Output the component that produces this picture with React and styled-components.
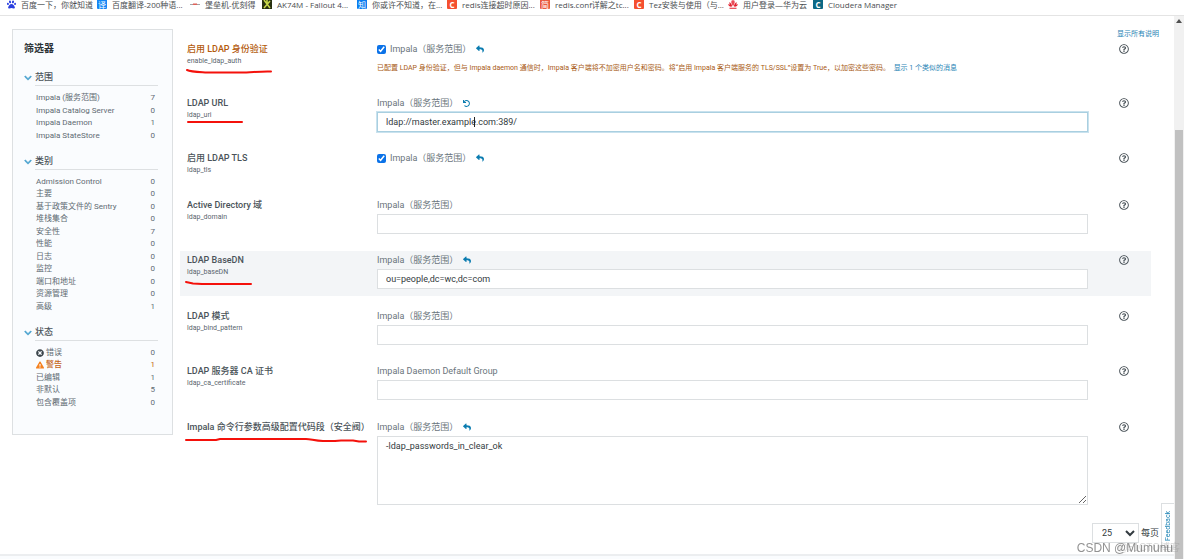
import React from 'react';
import styled, { createGlobalStyle } from 'styled-components';
import {
  FaReply,
  FaUndo,
  FaRegQuestionCircle,
  FaChevronDown,
  FaTimesCircle,
  FaExclamationTriangle,
  FaPaw,
} from 'react-icons/fa';

const GlobalStyle = createGlobalStyle`
  * { box-sizing: border-box; }
  body {
    margin: 0;
    background: #fff;
    color: #5a656d;
    font-family: Roboto, "Noto Sans CJK SC", sans-serif;
    font-size: 9px;
    line-height: 12px;
    overflow: hidden;
  }
  button, input, textarea, select { font: inherit; color: inherit; margin: 0; }
  a { color: #1f84b5; text-decoration: none; }
  ul { list-style: none; margin: 0; padding: 0; }
`;

const Shell = styled.div`
  display: flex;
  flex-direction: column;
  min-height: 100vh;
`;

const BookmarkBar = styled.nav`
  display: flex;
  gap: 10px;
  height: 16px;
  padding-left: 6px;
  border-bottom: 1px solid #e4e4e4;
  overflow: hidden;
  font-family: "Open Sans", "Noto Sans CJK SC", sans-serif;
  font-size: 8px;
  line-height: 9px;
`;

const Bookmark = styled.a`
  display: flex;
  flex: none;
  gap: 5px;
  height: 9px;
  color: #4a4d50;
`;

const BookmarkLabel = styled.span`
  width: ${(p) => p.$width}px;
  white-space: nowrap;
`;

const SiteIcon = styled.span`
  display: flex;
  align-items: center;
  justify-content: center;
  width: 10px;
  height: 9px;
  border-radius: 0 0 1px 1px;
  background: ${(p) => p.$bg || 'transparent'};
  color: ${(p) => p.$color || '#fff'};
  font-size: 8px;
  line-height: 8px;
  font-weight: ${(p) => (p.$bold ? 700 : 400)};
`;

const Body = styled.div`
  display: flex;
  flex: 1;
`;

const Page = styled.div`
  flex: 1;
  min-width: 0;
  display: flex;
  flex-direction: column;
`;

const Columns = styled.div`
  display: flex;
  align-items: flex-start;
  gap: 7px;
  padding: 13px 15px 11px 12px;
`;

const Sidebar = styled.aside`
  flex: none;
  width: 161px;
  padding: 11px 14px 25px 11px;
  border: 1px solid #dde0e2;
  background: #fafcfe;
`;

const SidebarTitle = styled.h2`
  margin: 0 0 13px;
  color: #2b3236;
  font-size: 10px;
  line-height: 16px;
  font-weight: 700;
`;

const Section = styled.section`
  & + & { margin-top: 12px; }
`;

const SectionHeader = styled.button`
  display: grid;
  grid-template-columns: 11px 1fr;
  align-items: center;
  width: 100%;
  height: 16px;
  margin-bottom: 6px;
  padding: 0;
  border: 0;
  background: none;
  text-align: left;
  font-weight: 500;
  line-height: 15px;
  color: #4a5359;
  & > svg { color: #4ba3cf; stroke: #4ba3cf; stroke-width: 30; }
  & > span { border-bottom: 1px solid #dde0e2; }
`;

const FilterList = styled.ul`
  display: grid;
  grid-auto-rows: 1fr;
  height: ${(p) => p.$height}px;
  padding: 0 3px 0 12px;
  font-size: 8px;
  line-height: 12px;
`;

const FilterLink = styled.a`
  display: flex;
  align-items: center;
  gap: 2px;
  color: ${(p) => (p.$warn ? '#c46210' : '#5f6b73')};
  font-weight: ${(p) => (p.$warn ? 500 : 400)};
`;

const FilterCount = styled.span`
  margin-left: auto;
  font-weight: 400;
`;

const Main = styled.main`
  flex: 1;
  min-width: 0;
  padding-top: 1px;
`;

const ShowAll = styled.div`
  margin-bottom: 2px;
  text-align: right;
  font-size: 7px;
  line-height: 8px;
`;

const Row = styled.div`
  display: grid;
  grid-template-columns: 190px minmax(0, 1fr) 63px;
  min-height: 36px;
  margin: 0 8px 10px 0;
  padding: 3px 0 7px 7px;
  background: ${(p) => (p.$active ? '#f3f5f7' : 'transparent')};
  &:nth-child(odd) { margin-bottom: 11px; }
`;

const RowName = styled.div`
  position: relative;
`;

const Title = styled.div`
  color: ${(p) => (p.$warn ? '#b35a0c' : '#4a5359')};
  font-weight: 500;
  white-space: nowrap;
`;

const PropertyName = styled.div`
  font-size: 7px;
  line-height: 12px;
`;

const Stroke = styled.svg`
  position: absolute;
  left: -2px;
  top: ${(p) => p.$top}px;
  width: 184px;
  height: 8px;
  overflow: visible;
  fill: none;
  stroke: #f4110b;
  stroke-width: 2;
  stroke-linecap: round;
  stroke-linejoin: round;
`;

const FieldLabel = styled.label`
  display: inline-flex;
  align-items: center;
  gap: 4px;
  height: 12px;
  color: #6a757c;
`;

const FieldHead = styled.div`
  display: flex;
  align-items: center;
  gap: 5px;
  height: 12px;
`;

const Checkbox = styled.input`
  width: 9px;
  height: 9px;
  accent-color: #0b72e8;
`;

const IconButton = styled.button`
  display: flex;
  padding: 0;
  border: 0;
  background: none;
  color: ${(p) => (p.$help ? '#4c555b' : '#0b7cb0')};
`;

const HelpCell = styled.div`
  display: flex;
  align-items: flex-start;
  padding: 1px 0 0 31px;
`;

const InputWrap = styled.div`
  position: relative;
`;

const TextInput = styled.input`
  display: block;
  width: 100%;
  height: 20px;
  margin-top: 3px;
  padding: 0 8px;
  border: 1px solid ${(p) => (p.$focus ? '#a9cfe0' : '#dcdfe1')};
  box-shadow: ${(p) => (p.$focus ? '0 0 0 1px #c9e2ee' : 'none')};
  background: #fff;
  color: #333b40;
  outline: 0;
`;

const Caret = styled.span`
  position: absolute;
  left: 97px;
  top: 5px;
  width: 1px;
  height: 10px;
  background: #222;
`;

const TextArea = styled.textarea`
  display: block;
  width: 100%;
  height: 69px;
  margin-top: 3px;
  padding: 3px 8px;
  border: 1px solid #dcdfe1;
  background: #fff;
  color: #333b40;
  outline: 0;
`;

const Warning = styled.p`
  margin: 6px 0 1px;
  color: #a85a14;
  font-size: 7px;
  line-height: 14px;
  white-space: nowrap;
  & > a { margin-left: 2px; }
`;

const Pager = styled.label`
  display: flex;
  justify-content: flex-end;
  align-items: center;
  gap: 2px;
  padding-top: 1px;
  color: #333b40;
`;

const PageSize = styled.select`
  width: 47px;
  height: 20px;
  padding: 0 0 0 5px;
  border: 1px solid #dcdfe1;
  background: #fff;
`;

const Footer = styled.footer`
  flex: 1;
  border-top: 2px solid #eceef0;
  background: #fafcfe;
`;

const Scrollbar = styled.div`
  flex: none;
  display: flex;
  flex-direction: column;
  align-items: center;
  width: 10px;
  padding-top: 3px;
  background: #f1f1f1;
`;

const ScrollThumb = styled.div`
  flex: 1;
  width: 8px;
  margin-top: 107px;
  background: #c1c1c1;
`;

const FeedbackTab = styled.button`
  position: fixed;
  right: 10px;
  bottom: 11px;
  width: 13px;
  height: 45px;
  padding: 0;
  border: 1px solid #dcdfe1;
  border-left: 0;
  background: #fff;
  color: #1f84b5;
  font-size: 7px;
  line-height: 12px;
  writing-mode: vertical-rl;
  transform: rotate(180deg);
`;

const Watermark = styled.div`
  position: fixed;
  right: ${(p) => p.$right}px;
  bottom: 4px;
  color: ${(p) => p.$color};
  font-family: "Liberation Sans", "Noto Sans CJK SC", sans-serif;
  font-size: ${(p) => p.$size}px;
  line-height: 14px;
  white-space: nowrap;
  pointer-events: none;
`;

const Huawei = () => (
  <svg width="10" height="9" viewBox="0 0 20 18" fill="#e3202f">
    <path d="M9.6 12C7 8 6 4 7.500 1c1.300-.8 2-.6 2.100.4zM10.400 12c2.600-4 3.600-8 2.100-11-1.300-.8-2-.6-2.100.4zM8.800 12.500C4 11 1.500 7 3.200 3.800 5 5 7.500 8.500 8.800 12.500zM11.200 12.500C16 11 18.500 7 16.800 3.800 15 5 12.500 8.500 11.200 12.500zM8 13.300C3 14 0 11 .6 8c2.800.8 5.800 2.600 7.400 5.300zM12 13.300c5 .7 8-2.300 7.400-5.300-2.800.8-5.800 2.600-7.400 5.300zM3 15.500h14v2H3z" />
  </svg>
);

const Bastion = () => (
  <svg width="10" height="9" viewBox="0 0 10 9">
    <path d="M0 4.500h3M7 4.500h3" stroke="#a3a6aa" />
    <path d="M3 5l1-1.500 1 1.500 1-1.500 1 1.500" stroke="#d8483e" fill="none" />
  </svg>
);

const Fallout = () => (
  <svg width="10" height="9" viewBox="0 0 10 9">
    <path d="M0 0h10v9H0z" fill="#283011" />
    <path d="M2 0l6 8M8 1L2 8M5 0v3" stroke="#c8d84a" strokeWidth="1.500" />
  </svg>
);

const bookmarks = [
  { label: '百度一下，你就知道', width: 66, icon: <FaPaw size={9} />, color: '#2a3fe0' },
  { label: '百度翻译-200种语...', width: 68, icon: '译', bg: '#1487f5' },
  { label: '堡垒机-优刻得', width: 47, icon: <Bastion /> },
  { label: 'AK74M - Fallout 4...', width: 70, icon: <Fallout /> },
  { label: '你或许不知道，在...', width: 65, icon: '知', bg: '#0a7cf0' },
  { label: 'redis连接超时原因...', width: 68, icon: 'C', bg: '#f5502f', bold: true },
  { label: 'redis.conf详解之tc...', width: 69, icon: '简', bg: '#ea5a41' },
  { label: 'Tez安装与使用（与...', width: 69, icon: 'C', bg: '#f5502f', bold: true },
  { label: '用户登录—华为云', width: 60, icon: <Huawei /> },
  { label: 'Cloudera Manager', width: 67, icon: 'C', bg: '#0c6884', bold: true },
];

const sections = [
  {
    title: '范围',
    height: 50,
    items: [
      ['Impala (服务范围)', 7],
      ['Impala Catalog Server', 0],
      ['Impala Daemon', 1],
      ['Impala StateStore', 0],
    ],
  },
  {
    title: '类别',
    height: 137,
    items: [
      ['Admission Control', 0],
      ['主要', 0],
      ['基于政策文件的 Sentry', 0],
      ['堆栈集合', 0],
      ['安全性', 7],
      ['性能', 0],
      ['日志', 0],
      ['监控', 0],
      ['端口和地址', 0],
      ['资源管理', 0],
      ['高级', 1],
    ],
  },
  {
    title: '状态',
    height: 62,
    items: [
      ['错误', 0, 'error'],
      ['警告', 1, 'warn'],
      ['已编辑', 1],
      ['非默认', 5],
      ['包含覆盖项', 0],
    ],
  },
];

const SCOPE = 'Impala（服务范围）';

const settings = [
  {
    id: 'enable_ldap_auth',
    title: '启用 LDAP 身份验证',
    type: 'checkbox',
    warn: true,
    action: 'reply',
    stroke: { top: 26, d: 'M2 1C6 3 14 3 22 3.500H56C66 3.500 76 2 86 2.500' },
  },
  {
    id: 'ldap_uri',
    title: 'LDAP URL',
    type: 'text',
    value: 'ldap://master.example.com:389/',
    focus: true,
    action: 'undo',
    stroke: { top: 23, d: 'M3 2H57' },
  },
  { id: 'ldap_tls', title: '启用 LDAP TLS', type: 'checkbox', action: 'reply' },
  { id: 'ldap_domain', title: 'Active Directory 域', type: 'text' },
  {
    id: 'ldap_baseDN',
    title: 'LDAP BaseDN',
    type: 'text',
    value: 'ou=people,dc=wc,dc=com',
    action: 'reply',
    active: true,
    stroke: { top: 26, d: 'M1 2L8 3.500L17 4H66' },
  },
  { id: 'ldap_bind_pattern', title: 'LDAP 模式', type: 'text' },
  {
    id: 'ldap_ca_certificate',
    title: 'LDAP 服务器 CA 证书',
    type: 'text',
    scope: 'Impala Daemon Default Group',
  },
  {
    id: 'impala_safety_valve',
    title: 'Impala 命令行参数高级配置代码段（安全阀）',
    hideName: true,
    type: 'textarea',
    value: '-ldap_passwords_in_clear_ok',
    action: 'reply',
    stroke: { top: 17, d: 'M1 2H31L35 1H121C126 1 130 3 138 3H150L156 2.500H168L174 3.500H181' },
  },
];

function FilterSection({ title, height, items }) {
  return (
    <Section>
      <SectionHeader type="button">
        <FaChevronDown size={8} />
        <span>{title}</span>
      </SectionHeader>
      <FilterList $height={height}>
        {items.map(([name, count, kind]) => (
          <li key={name}>
            <FilterLink href="#" $warn={kind === 'warn'}>
              {kind === 'error' && <FaTimesCircle size={8} color="#3d474d" />}
              {kind === 'warn' && <FaExclamationTriangle size={8} color="#f58220" />}
              {name}
              <FilterCount>{count}</FilterCount>
            </FilterLink>
          </li>
        ))}
      </FilterList>
    </Section>
  );
}

function Setting({ s }) {
  const scope = s.scope || SCOPE;
  return (
    <Row $active={s.active}>
      <RowName>
        <Title $warn={s.warn}>{s.title}</Title>
        {!s.hideName && <PropertyName>{s.id}</PropertyName>}
        {s.stroke && (
          <Stroke $top={s.stroke.top} aria-hidden="true">
            <path d={s.stroke.d} />
          </Stroke>
        )}
      </RowName>
      <div>
        <FieldHead>
          <FieldLabel htmlFor={s.id}>
            {s.type === 'checkbox' && <Checkbox id={s.id} type="checkbox" defaultChecked />}
            {scope}
          </FieldLabel>
          {s.action && (
            <IconButton type="button" aria-label="还原">
              {s.action === 'undo' ? <FaUndo size={7} /> : <FaReply size={8} />}
            </IconButton>
          )}
        </FieldHead>
        {s.type === 'text' && (
          <InputWrap>
            <TextInput id={s.id} type="text" defaultValue={s.value} $focus={s.focus} />
            {s.focus && <Caret />}
          </InputWrap>
        )}
        {s.type === 'textarea' && <TextArea id={s.id} defaultValue={s.value} />}
        {s.warn && (
          <Warning>
            已配置 LDAP 身份验证，但与 Impala daemon 通信时，Impala 客户端将不加密用户名和密码。将“启用 Impala
            客户端服务的 TLS/SSL”设置为 True，以加密这些密码。 <a href="#">显示 1 个类似的消息</a>
          </Warning>
        )}
      </div>
      <HelpCell>
        <IconButton type="button" $help aria-label="帮助">
          <FaRegQuestionCircle size={10} />
        </IconButton>
      </HelpCell>
    </Row>
  );
}

export default function App() {
  return (
    <Shell>
      <GlobalStyle />
      <BookmarkBar>
        {bookmarks.map((b) => (
          <Bookmark href="#" key={b.label}>
            <SiteIcon $bg={b.bg} $color={b.color} $bold={b.bold}>{b.icon}</SiteIcon>
            <BookmarkLabel $width={b.width}>{b.label}</BookmarkLabel>
          </Bookmark>
        ))}
      </BookmarkBar>
      <Body>
        <Page>
          <Columns>
            <Sidebar>
              <SidebarTitle>筛选器</SidebarTitle>
              {sections.map((s) => (
                <FilterSection key={s.title} {...s} />
              ))}
            </Sidebar>
            <Main>
              <ShowAll>
                <a href="#">显示所有说明</a>
              </ShowAll>
              <div>
                {settings.map((s) => (
                  <Setting key={s.id} s={s} />
                ))}
              </div>
              <Pager>
                <PageSize defaultValue="25">
                  <option value="25">25</option>
                  <option value="50">50</option>
                </PageSize>
                每页
              </Pager>
            </Main>
          </Columns>
          <Footer />
        </Page>
        <Scrollbar aria-hidden="true">
          <svg width="6" height="4" viewBox="0 0 6 4">
            <path d="M3 0l3 4H0z" fill="#505050" />
          </svg>
          <ScrollThumb />
        </Scrollbar>
      </Body>
      <FeedbackTab type="button">Feedback</FeedbackTab>
      <Watermark $right={4} $color="rgba(150,150,150,0.4)" $size={10}>@51CTO博客</Watermark>
      <Watermark $right={11} $color="rgba(110,110,110,0.75)" $size={12}>CSDN @Mumunu</Watermark>
    </Shell>
  );
}
